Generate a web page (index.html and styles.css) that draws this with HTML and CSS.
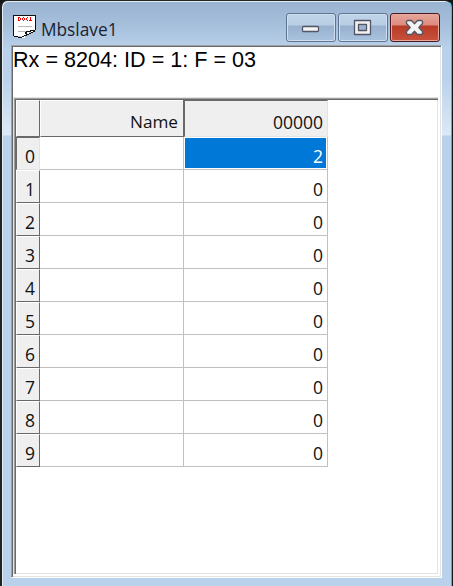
FILE: index.html
```html
<!DOCTYPE html>
<html lang="en">
<head>
<meta charset="utf-8">
<title>Mbslave1</title>
<link rel="stylesheet" href="styles.css">
</head>
<body>
<div class="window">
  <header class="titlebar">
    <svg class="doc-icon" width="24" height="25" viewBox="0 0 24 25" shape-rendering="crispEdges">
      <path d="M.5 1.500h22v14h-3v2h-4v2h-2v2h-2v2H8v-2H5v1H.5z" fill="#fff"/>
      <path d="M.5 22V1.500h22V16M1 22.500h4m0 1h4m0-1h2m0-1h2v-2h-1v-1h1v-1h4v-1h5M13 20.500h3m0-1h2m0-1h2m0-1h2" fill="none" stroke="#111"/>
      <path d="M5 12.500h14M5 17.500h8" stroke="#b8b8b8"/>
      <path d="M5.500 3v4M5 3.500h2M5 6.500h2M7.500 4v2M9.500 4v2M10 3.500h1M10 6.500h1M11.500 4v2M15 3.500h-1M13.500 4v2M15 6.500h-1M17.500 3v4M16 6.500h3" fill="none" stroke="#f00000" stroke-width="1.300"/>
    </svg>
    <span class="title">Mbslave1</span>
    <div class="controls">
      <button class="ctl" aria-label="Minimize"><svg width="50" height="29"><rect x="16.500" y="13.500" width="16" height="5" rx="1" fill="#f4f4f4" stroke="#535666" stroke-width="1.300"/></svg></button>
      <button class="ctl" aria-label="Maximize"><svg width="50" height="29"><path fill-rule="evenodd" d="M16.500 7.500h16v14h-16zM20.500 11.500v6h8v-6z" fill="#f1f1f1" stroke="#535666" stroke-width="1.300" stroke-linejoin="round"/></svg></button>
      <button class="ctl close" aria-label="Close"><svg width="50" height="29"><path d="M17.500 7.500h4l3 3.300 3-3.300h4l1 1v2L28.800 14.500l3.700 4v2l-1 1h-4l-3-3.300-3 3.300h-4l-1-1v-2l3.700-4-3.700-4v-2z" fill="#f3f3f3" stroke="#535666" stroke-width="1.300" stroke-linejoin="round"/></svg></button>
    </div>
  </header>
  <main class="client">
    <div class="status"><span>Rx = 8204: ID = 1: F = 03</span></div>
    <div class="view">
      <div class="grid">
        <div class="head"></div><div class="head name">Name</div><div class="head active-col">00000</div>
        <div class="row-id active-row">0</div><div class="cell"></div><div class="cell selected"><span>2</span></div>
        <div class="row-id">1</div><div class="cell"></div><div class="cell">0</div>
        <div class="row-id">2</div><div class="cell"></div><div class="cell">0</div>
        <div class="row-id">3</div><div class="cell"></div><div class="cell">0</div>
        <div class="row-id">4</div><div class="cell"></div><div class="cell">0</div>
        <div class="row-id">5</div><div class="cell"></div><div class="cell">0</div>
        <div class="row-id">6</div><div class="cell"></div><div class="cell">0</div>
        <div class="row-id">7</div><div class="cell"></div><div class="cell">0</div>
        <div class="row-id">8</div><div class="cell"></div><div class="cell">0</div>
        <div class="row-id">9</div><div class="cell"></div><div class="cell">0</div>
      </div>
    </div>
  </main>
</div>
</body>
</html>
```
FILE: styles.css
```css
* { box-sizing: border-box; }
body {
  margin: 0;
  width: 453px;
  height: 586px;
  overflow: hidden;
  background: #151515;
  font-family: "Open Sans", "Noto Sans", sans-serif;
  color: #111;
}
.window {
  height: 586px;
  margin-right: 1px;
  padding: 0 9px 8px;
  border: solid #222;
  border-width: 1px 0 0 2px;
  border-right: 1px solid #35bce0;
  border-radius: 7px 7px 0 0;
  background: linear-gradient(#98b2d0 0, #a6bfdb 24px, #b9d1ea 48px, #b9d1ea 75px, #dce9f6 134px, #b9d1ea 135px);
  box-shadow: inset 1px 1px #e3edf6;
}
.titlebar {
  height: 44px;
  display: flex;
  align-items: flex-start;
  padding: 13px 2px 0 2px;
}
.doc-icon { flex: none; }
.title {
  margin: 4px 0 0 4px;
  font-size: 17.300px;
  line-height: 24px;
  color: #1b2430;
}
.controls { display: flex; gap: 2px; margin: -1px 0 0 auto; }
.ctl {
  width: 50px;
  height: 29px;
  padding: 0;
  border: 1px solid #60748d;
  border-radius: 3px;
  background: linear-gradient(#c0d4e9 0, #b9cee4 11px, #98b1ce 12px, #a9c2de 100%);
  box-shadow: inset 0 0 0 1px #cddff0;
}
.ctl svg { display: block; margin: -1px; }
.close {
  border-color: #4d1820;
  background: linear-gradient(#e6a59b 0, #dc8b7e 11px, #b83b26 12px, #c9513c 100%);
  box-shadow: inset 0 0 0 1px #e7a79d;
}
.client {
  width: 431px;
  height: 533px;
  border: 1px solid #a0a0a0;
  border-right-color: #fff;
  border-bottom-color: #fff;
  background: #fff;
  box-shadow: inset 1px 1px #696969, inset -1px -1px #e3e3e3;
  padding: 1px;
}
.status {
  height: 50px;
  font: 21.600px/25px "Liberation Sans", Arial, sans-serif;
  color: #000;
  white-space: nowrap;
}
.view {
  width: 426px;
  height: 478px;
  border: 1px solid #e3e3e3;
  border-right-color: #fff;
  border-bottom-color: #fff;
  padding: 2px;
  box-shadow: inset 1px 1px #a0a0a0, inset 2px 2px #696969, inset -1px -1px #e3e3e3;
}
.grid {
  display: grid;
  grid-template-columns: 24px 144px 144px;
  grid-template-rows: 37px repeat(10, 33px);
  width: 312px;
  font-size: 17.500px;
  line-height: 24px;
}
.head, .row-id {
  background: #efefef;
  border: 1px solid #696969;
  border-top-color: #fff;
  border-left-color: #fff;
  text-align: right;
}
.head { padding: 9px 5px 0 0; }
.name { font-size: 17.200px; }
.active-col {
  border-color: #696969 #e3e3e3 #e3e3e3 #696969;
  box-shadow: -1px 0 #696969;
  padding-right: 4px;
}
.row-id { padding: 6px 4px 0 0; }
.active-row {
  border-color: #696969 #e3e3e3 #e3e3e3 #696969;
}
.cell {
  border: solid #c0c0c0;
  border-width: 0 1px 1px 0;
  padding: 7px 4px 0 0;
  text-align: right;
}
.selected { padding: 1px; }
.selected span {
  display: block;
  height: 30px;
  padding: 6px 3px 0 0;
  background: #0078d7;
  color: #fff;
}
```
